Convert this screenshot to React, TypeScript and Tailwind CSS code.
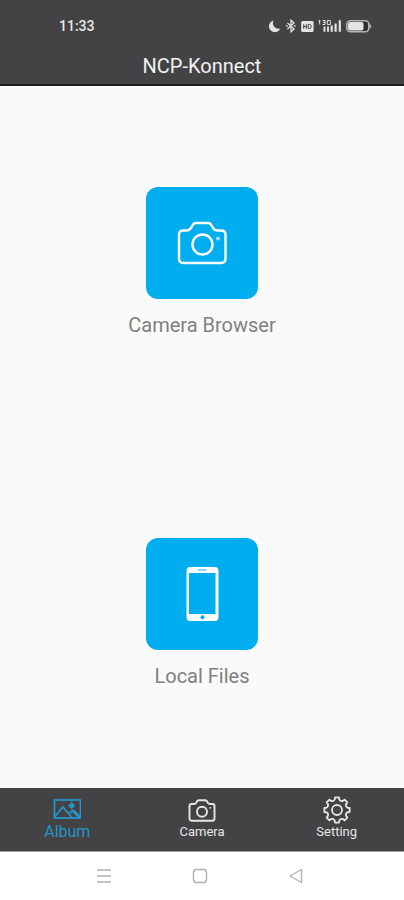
import { useState } from 'react'

type Tab = 'album' | 'camera' | 'setting'

// Outline of the cog: eight teeth with scooped gaps between them
const gearOutline = () => {
  const at = (r: number, deg: number) => {
    const rad = (deg * Math.PI) / 180
    return `${(14 + r * Math.cos(rad)).toFixed(2)} ${(14 + r * Math.sin(rad)).toFixed(2)}`
  }
  let d = `M${at(12.8, -99)}`
  for (let i = 0; i < 8; i++) {
    const mid = i * 45 - 90
    d += `L${at(12.8, mid + 9)}L${at(10.8, mid + 12)}Q${at(9, mid + 22.5)} ${at(10.8, mid + 33)}L${at(12.8, mid + 36)}`
  }
  return `${d}Z`
}

function CameraBrowserIcon() {
  return (
    <svg width="50" height="44" viewBox="0 0 50 44" fill="none" stroke="white" strokeWidth="2.4" strokeLinejoin="round" aria-hidden="true">
      <path d="M6 9.5H10Q12.5 9.5 13.8 7.2L16 3.6Q17 2 19 2H31Q33 2 34 3.6L36.2 7.2Q37.5 9.5 40 9.5H44Q48.5 9.5 48.5 13.5V37.5Q48.5 42 44 42H6.5Q2 42 2 37.5V13.5Q2 9.5 6 9.5Z" />
      <circle cx="25.5" cy="23.5" r="10" />
      <circle cx="41" cy="17.5" r="2" fill="#a5e0fa" stroke="none" />
    </svg>
  )
}

function PhoneIcon() {
  return (
    <svg width="34" height="56" viewBox="0 0 34 56" aria-hidden="true">
      <path
        fill="white"
        fillRule="evenodd"
        d="M5 1H30Q33.5 1 33.5 5V51Q33.5 55 30 55H5Q1.5 55 1.5 51V5Q1.5 1 5 1ZM4 7V48H30.5V7Z"
      />
      <path d="M13.5 4H21" stroke="#00adef" strokeWidth="1" strokeLinecap="round" />
      <circle cx="17.5" cy="51.2" r="2" fill="#00adef" />
    </svg>
  )
}

function AlbumTabIcon() {
  return (
    <svg width="28" height="28" viewBox="0 0 28 28" fill="none" stroke="currentColor" strokeWidth="1.8" aria-hidden="true">
      <rect x="1.5" y="4" width="26" height="18" />
      <path d="M2 20.5L10 11L19 21.5M16 17.8L19.5 14.5L27 21.5" />
      <circle cx="18.7" cy="9.5" r="2.6" fill="currentColor" stroke="none" />
      <path d="M18.7 13.5V5.5M15.2 9.5H22" strokeWidth="1" />
      <path d="M20.5 15L25.5 20" strokeWidth="3" />
    </svg>
  )
}

function CameraTabIcon() {
  return (
    <svg width="28" height="28" viewBox="0 0 28 28" fill="none" stroke="currentColor" strokeWidth="1.9" strokeLinejoin="round" aria-hidden="true">
      <path d="M3.5 8H6Q7.5 8 8.2 6.8L9 5.3Q9.6 4.2 10.8 4.2H17.2Q18.4 4.2 19 5.3L19.8 6.8Q20.5 8 22 8H24.5Q26.5 8 26.5 10V22.5Q26.5 24.7 24.3 24.7H3.7Q1.5 24.7 1.5 22.5V10Q1.5 8 3.5 8Z" />
      <circle cx="14" cy="15.8" r="5" />
      <circle cx="22.2" cy="11.8" r="0.9" fill="currentColor" stroke="none" />
    </svg>
  )
}

function SettingTabIcon() {
  return (
    <svg width="28" height="28" viewBox="0 0 28 28" fill="none" stroke="currentColor" strokeWidth="1.8" strokeLinejoin="round" aria-hidden="true">
      <path d={gearOutline()} />
      <circle cx="14" cy="14" r="5" />
    </svg>
  )
}

function StatusIcons() {
  return (
    <div className="flex items-center gap-1 text-[#e4e4e4]" aria-hidden="true">
      <svg width="14" height="14" viewBox="0 0 14 14" fill="currentColor">
        <path d="M5.5 1.5A5.9 5.9 0 1 0 12.3 9.5Q8.5 10.5 6.2 7.8Q4 5 5.5 1.5Z" />
      </svg>
      <svg width="11" height="14" viewBox="0 0 11 14" fill="none" stroke="currentColor" strokeWidth="1.3">
        <path d="M1.5 4L8 10L5 12.8V1.2L8 4L1.5 10" />
        <path d="M0 7H1.6M8 7H9.6" />
      </svg>
      <svg width="13" height="14" viewBox="0 0 13 14">
        <rect x="0.2" y="2" width="12.4" height="11" rx="1.5" fill="currentColor" />
        <path d="M2.7 5.3V9.7M5.3 5.3V9.7M2.7 7.5H5.3M7.2 5.3V9.7M7.2 5.4H8.4Q10.2 5.4 10.2 7.5T8.4 9.6H7.2" fill="none" stroke="#434345" strokeWidth="1" />
      </svg>
      <svg width="24" height="14" viewBox="0 0 24 14" fill="none" stroke="currentColor">
        <path d="M1.7 1V5.5M0.4 2H2M4.5 1.5H7V3.4H5.2M7 3.2V5.5H4.5M9.3 1.5H12.3V5.5H9.3Z" strokeWidth="1" />
        <path d="M6.5 7.5V12.8M10 7.5V12.8" strokeWidth="1.9" />
        <path d="M13.7 6.5V12.8M17.6 4.5V12.8M21.8 1.3V12.8" strokeWidth="2.2" />
      </svg>
      <svg width="26" height="14" viewBox="0 0 26 14">
        <rect x="0.8" y="1.8" width="22" height="11" rx="3.5" fill="#303032" stroke="#b4b4b5" strokeWidth="1.6" />
        <rect x="2" y="3" width="15.5" height="8.6" rx="2" fill="currentColor" />
        <path d="M23.5 4.3Q26.8 7.3 23.5 10.3Z" fill="#b4b4b5" />
      </svg>
    </div>
  )
}

const sources = [
  { label: 'Camera Browser', Icon: CameraBrowserIcon },
  { label: 'Local Files', Icon: PhoneIcon },
]

const tabs: { id: Tab; label: string; size: string; Icon: () => React.JSX.Element }[] = [
  { id: 'album', label: 'Album', size: 'text-base', Icon: AlbumTabIcon },
  { id: 'camera', label: 'Camera', size: 'text-[13px]', Icon: CameraTabIcon },
  { id: 'setting', label: 'Setting', size: 'text-[13px]', Icon: SettingTabIcon },
]

export default function App() {
  const [activeTab, setActiveTab] = useState<Tab>('album')

  return (
    <div className="min-h-screen flex flex-col bg-[#fafafa] font-['Roboto',sans-serif]">
      <header className="bg-[#434345] border-b-2 border-[#1c1c1d]">
        <div className="flex items-center justify-between h-13 pl-[59px] pr-8">
          <span className="text-sm font-medium text-[#e8e8e8]">11:33</span>
          <StatusIcons />
        </div>
        <h1 className="pb-1 text-center text-xl leading-7 text-[#f2f2f2]">NCP-Konnect</h1>
      </header>

      <main className="flex-1 flex flex-col">
        {sources.map(({ label, Icon }) => (
          <section key={label} className="flex-1 flex items-center justify-center">
            <button type="button" className="flex flex-col items-center gap-3.5">
              <span className="flex items-center justify-center w-28 h-28 rounded-xl bg-[#00adef]">
                <Icon />
              </span>
              <span className="text-xl leading-6 text-[#808080]">{label}</span>
            </button>
          </section>
        ))}
      </main>

      <nav className="grid grid-cols-3 h-16 bg-[#434345] border-b border-[#a0a0a0]">
        {tabs.map(({ id, label, size, Icon }) => (
          <button
            key={id}
            type="button"
            onClick={() => setActiveTab(id)}
            className={`flex flex-col items-center pt-2 ${activeTab === id ? 'text-[#2595c9]' : 'text-[#e6e6e6]'}`}
          >
            <Icon />
            <span className={`${size} leading-4`}>{label}</span>
          </button>
        ))}
      </nav>

      {/* System navigation */}
      <div className="flex items-center justify-center gap-20 h-12 pr-1 bg-white text-[#b0b0b0]">
        <button type="button" aria-label="Recent apps">
          <svg className="block" width="16" height="16" viewBox="0 0 16 16" fill="none" stroke="currentColor" strokeWidth="1.5">
            <path d="M1 2H15M1 8H15M1 14H15" />
          </svg>
        </button>
        <button type="button" aria-label="Home">
          <svg className="block" width="16" height="16" viewBox="0 0 16 16" fill="none" stroke="currentColor" strokeWidth="1.4">
            <rect x="1.5" y="1.5" width="13" height="13" rx="3" />
          </svg>
        </button>
        <button type="button" aria-label="Back">
          <svg className="block" width="16" height="16" viewBox="0 0 16 16" fill="none" stroke="currentColor" strokeWidth="1.3" strokeLinejoin="round">
            <path d="M2 8L13.5 1.5V14.5Z" />
          </svg>
        </button>
      </div>
    </div>
  )
}
